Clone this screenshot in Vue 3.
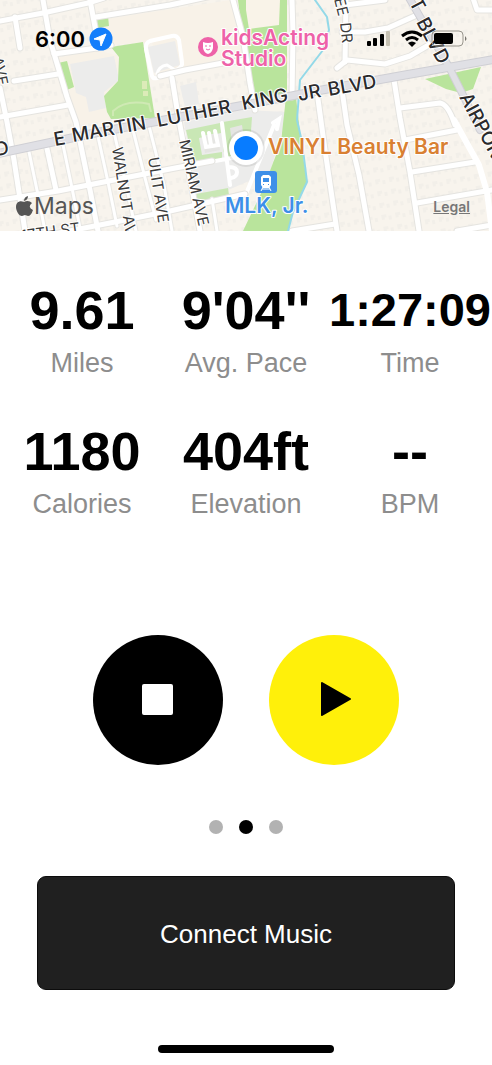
<script setup>
import { ref } from 'vue'

const stats = [
  { value: '9.61', label: 'Miles' },
  { value: "9'04''", label: 'Avg. Pace' },
  { value: '1:27:09', label: 'Time', compact: true },
  { value: '1180', label: 'Calories' },
  { value: '404ft', label: 'Elevation' },
  { value: '--', label: 'BPM' },
]

const pages = ['Map', 'Run', 'Splits']
const current = ref(1)

const streets = [
  'M0 21 L43 13 L88 3 L104 -2',
  'M43 0 L50 40 L67 97 L76 122 L90 190 L98 231',
  'M90 0 L95 27 L97 48',
  'M96 17 L170 5 L212 -4',
  'M54 54 L97 48 L111 45',
  'M15 17 L20 48',
  'M14 81 L58 74',
  'M0 117 L68 105',
  'M0 88 L7 122 L14 160 L25 231',
  'M160 76 L185 70 L223 63 L246 60',
  'M172 78 L178 115 L200 231',
  'M233 0 L243 37 L250 83 L255 110',
  'M292 0 L293 33 L292 97',
  'M0 200 L58 191 L170 169 L212 161',
  'M54 234 L110 223 L170 211 L245 194',
  'M46 144 L56 190',
  'M317 92 L325 150 L337 231',
  'M342 90 L347 125 L359 175 L369 231',
  'M394 80 L400 118 L410 172 L419 231',
  'M400 108 L440 103 Q448 104 455 125',
  'M405 140 L457 130',
  'M412 172 L475 162',
  'M417 203 L492 190',
  'M457 231 L492 225',
  'M346 0 L345 62',
  'M342 32 L365 32 L388 28 L417 15',
  'M337 68 L347 60 L385 64 L410 56 L432 43',
  'M345 5 L385 0',
  'M473 -2 L477 10 L492 10',
  'M292 231 L335 224',
]

const lanes = [
  'M28 147 L38 195 L45 231',
  'M62 140 L72 188 L80 228',
  'M97 132 L108 182 L117 226',
  'M113 128 L125 180 L136 231',
  'M132 126 L144 174 L156 220',
  'M148 122 L164 185 L172 231',
  'M212 199 L217 231',
]
</script>

<template>
  <main class="screen">
    <section class="map" aria-label="Route map">
      <svg class="map-art" viewBox="0 0 492 231" preserveAspectRatio="xMidYMid slice">
        <defs>
          <pattern id="lots" width="14" height="12" patternUnits="userSpaceOnUse" patternTransform="rotate(-10)">
            <path d="M2 2h5v3h-2v2H2zM9 4h3v4h-3z" fill="#f2efe9" />
          </pattern>
        </defs>
        <rect width="492" height="231" fill="#f8f4ed" />
        <rect width="492" height="231" fill="url(#lots)" />
        <path d="M56 58L97 50l22 6v24l-15 16 3 16 4 8-36 6zM99 20l132-20 12 58-85 16-6-32-52 4z" fill="#f8f2e8" />

        <g fill="#ececeb">
          <path d="M70 64l44-8 5 24-15 12 2 16-17 4-3-15-10-4z" />
          <path d="M148 47l27-6 5 24-26 8z" />
          <path d="M180 86l16-4 3 22-14 3z" />
          <path d="M184 122l60-12 44 2-18 60-72 31z" />
        </g>
        <g fill="#b9e49c">
          <path d="M96 18l12-2 1 10-12 2z" />
          <path d="M58 63l9-2 7 26-7 3z" />
          <path d="M111 47l32-5 12 76-44 1-4-7-3-16 14-15 1-24z" />
          <path d="M238 0h49v96l-33 5-7-40-6-36z" />
          <path d="M296 97l5 45 6 40-14 30-5 19h-45l20-42 18-47 5-45z" />
          <path d="M425 79l56-12-8 22-12 4-15-4z" />
        </g>
        <path d="M246 10V0h34l-1 25-30 4z" fill="#f9f3e8" />
        <g fill="#c9e7b5">
          <path d="M186 130l34-7 1 10-22 5 3 17 20-3v8l-28 4z" />
          <path d="M223 122l29-5-2 28-22 14-5-8z" />
          <path d="M196 194l32-6 1 7-30 9z" />
        </g>
        <path d="M202 136l15-3 3 17-15 3zM230 128l12-3 2 14-12 3z" fill="#e5e5e2" />
        <g fill="none" stroke="#fff" stroke-width="4" stroke-linecap="round">
          <path d="M172 36l-22 5q-5 2-4 8l6 27q1 3 5 2l19-8q7-3 6-8l-3-22q-2-5-7-4z" />
          <path d="M157 74q2-8 10-9l8 5" stroke-width="3" />
          <path d="M203 133l3 14 12-2-3-14M209 133l2 12M183 131l12 73M222 123l8 62M229 167q8 0 8 5t-6 6M246 194l28-69M273 123l6-4-2 10M188 166l60-11" />
        </g>
        <path d="M113 116v-5q13-12 36-7l2 8" fill="none" stroke="#cfe9b4" stroke-width="2" />
        <path d="M142 81h5v8h-5zM143 91h5v5h-5z" fill="#dcebb8" />

        <g fill="none" stroke-linejoin="round" stroke-linecap="round">
          <path v-for="d in lanes" :key="'lc' + d" :d="d" stroke="#e9e8e4" stroke-width="5" />
          <path v-for="d in streets" :key="'sc' + d" :d="d" stroke="#e5e4e0" stroke-width="7" />
          <path v-for="d in lanes" :key="'l' + d" :d="d" stroke="#fff" stroke-width="3" />
          <path v-for="d in streets" :key="'s' + d" :d="d" stroke="#fff" stroke-width="5" />
          <path d="M454 120L479 165l8 27 5 39" stroke="#fff" stroke-width="6" />
          <path d="M315 0l12 17 2 13-6 20-23 30-3 40 5 22 5 40-14 30-5 19" stroke="#93d9e8" stroke-width="2" />
          <path d="M-4 154L100 132l150-28 72-14 83-15 91-16" stroke="#cfcfd4" stroke-width="9" />
          <path d="M408-4l41 71 13 26 18 37" stroke="#cfcfd4" stroke-width="8" />
          <path d="M-4 154L100 132l150-28 72-14 83-15 91-16" stroke="#e0e0e5" stroke-width="7" />
          <path d="M408-4l41 71 13 26 18 37" stroke="#e0e0e5" stroke-width="6" />
        </g>

        <g class="road-label major">
          <text transform="translate(55 146) rotate(-10)">E</text>
          <text transform="translate(73 142) rotate(-10)">MARTIN</text>
          <text transform="translate(158 127) rotate(-11)">LUTHER</text>
          <text transform="translate(243 110) rotate(-11)">KING</text>
          <text transform="translate(299 101) rotate(-10)">JR</text>
          <text transform="translate(329 96) rotate(-10)">BLVD</text>
          <text transform="translate(-4 156) rotate(-8)">D</text>
          <text transform="translate(403 -9) rotate(62)">TT</text>
          <text transform="translate(416 22) rotate(62)">BLVD</text>
          <text transform="translate(459 97) rotate(62)">AIRPORT</text>
        </g>
        <g class="road-label">
          <text transform="translate(332 -9) rotate(76)">LEE</text>
          <text transform="translate(340 23) rotate(84)">DR</text>
          <text transform="translate(112 148) rotate(81)">WALNUT AVE</text>
          <text transform="translate(148 158) rotate(81)">ULIT AVE</text>
          <text transform="translate(179 141) rotate(77)">MIRIAM AVE</text>
          <text transform="translate(22 241) rotate(-8)">17TH ST</text>
          <text transform="translate(-8 58) rotate(78)">AVE</text>
        </g>

        <g class="poi pink">
          <circle cx="208" cy="47" r="10" />
          <path d="M203 42q5 2 10 0v6q-1 5-5 6-4-1-5-6z" fill="#fff" />
          <path d="M205 46h2M209 46h2M206 49q2 2 4 0" fill="none" stroke="#f066ad" />
          <text x="221" y="45">kidsActing</text>
          <text x="221" y="66">Studio</text>
        </g>
        <text class="poi orange" x="268" y="154">VINYL Beauty Bar</text>
        <g class="poi blue">
          <rect x="255" y="171" width="22" height="22" rx="3" />
          <path d="M263 175h6l2 2v8l-2 3h-6l-2-3v-8z" fill="#fff" />
          <path d="M263 178h6v4h-6zM263 184h1v1h-1zM268 184h1v1h-1z" />
          <path d="M263 187l-2 4M269 187l2 4M262 189h8" stroke="#fff" fill="none" />
          <text x="225" y="213">MLK, Jr.</text>
        </g>
        <circle cx="246" cy="148" r="19" fill="#000" opacity=".08" />
        <circle cx="246" cy="148" r="17" fill="#fff" />
        <circle cx="246" cy="148" r="12" fill="#087cff" />
      </svg>

      <header class="status">
        <span class="clock">6:00</span>
        <svg class="locate" width="24" height="24" viewBox="0 0 24 24" aria-label="Location in use">
          <circle cx="12" cy="12" r="11.5" fill="#147efb" />
          <path d="M17 7L5 12l6 1 1 6z" fill="#fff" stroke="#fff" stroke-linejoin="round" />
        </svg>
        <svg class="signals" width="102" height="18" viewBox="0 0 102 18" aria-label="Signal, Wi-Fi and battery">
          <rect x="1" y="11" width="4" height="5" rx="1" />
          <rect x="7" y="8" width="4" height="8" rx="1" />
          <rect x="14" y="4" width="4" height="12" rx="1" />
          <rect x="20" y="1" width="4" height="15" rx="1" fill="#c5c0b2" />
          <g fill="none" stroke="#000" stroke-width="3">
            <path d="M36 6q10-8 20 0" />
            <path d="M40 10q6-5 12 0" />
          </g>
          <path d="M42 13q4-3 8 0l-4 4z" />
          <rect x="66" y="1" width="31" height="15" rx="4" fill="none" stroke="#98958d" />
          <rect x="68" y="3" width="19" height="11" rx="2" />
          <path d="M99 6q3 3 0 5z" fill="#77746e" />
        </svg>
      </header>

      <footer class="credits">
        <span class="brand">
          <svg width="17" height="20" viewBox="0 0 17 20" aria-label="Apple">
            <path d="M12 0q0 4-4 5 0-4 4-5M16 7q-5 4 1 7-2 6-5 6l-3-1-3 1c-3 0-6-5-6-9 0-5 4-7 8-5 3-2 6-1 8 1" />
          </svg>Maps</span>
        <a class="legal" href="#legal">Legal</a>
      </footer>
    </section>

    <dl class="stats">
      <div v-for="s in stats" :key="s.label" class="stat">
        <dd :class="{ compact: s.compact }">{{ s.value }}</dd>
        <dt>{{ s.label }}</dt>
      </div>
    </dl>

    <div class="controls">
      <button class="round stop" type="button" aria-label="Stop">
        <svg width="32" height="32" viewBox="0 0 32 32"><rect width="31" height="31" rx="2" fill="#fff" /></svg>
      </button>
      <button class="round play" type="button" aria-label="Resume">
        <svg width="38" height="38" viewBox="0 0 38 38">
          <path d="M7 2L35 18 7 34z" stroke="#000" stroke-width="2" stroke-linejoin="round" />
        </svg>
      </button>
    </div>

    <nav class="dots" aria-label="Pages">
      <button
        v-for="(p, i) in pages"
        :key="p"
        type="button"
        :aria-label="p"
        :class="{ on: i === current }"
        @click="current = i"
      ></button>
    </nav>

    <button class="music" type="button">Connect Music</button>
    <div class="home-bar"></div>
  </main>
</template>

<style>
body {
  background: #fff;
}
</style>

<style scoped>
.screen {
  min-height: 100vh;
  box-sizing: border-box;
  padding-bottom: 12px;
  display: flex;
  flex-direction: column;
  background: #fff;
  color: #000;
  font-family: "Liberation Sans", Arial, sans-serif;
}
button {
  border: 0;
  padding: 0;
  font: inherit;
  cursor: pointer;
}
.map {
  position: relative;
  font-family: Inter, sans-serif;
}
.map-art {
  display: block;
  width: 100%;
  height: 231px;
}
.road-label {
  font-size: 15px;
  fill: #3c3c3c;
  stroke: #fff;
  stroke-width: 2px;
  stroke-linejoin: round;
  paint-order: stroke;
}
.major {
  font-size: 19px;
  font-weight: 500;
  fill: #2a2a2c;
}
.poi {
  font-size: 21px;
  font-weight: 600;
}
.poi text,
text.poi {
  stroke: #fff;
  stroke-width: 2px;
  stroke-linejoin: round;
  paint-order: stroke;
}
.pink {
  fill: #ee62a8;
}
.orange {
  fill: #d98032;
}
.blue {
  fill: #3d8fe8;
}
.status {
  position: absolute;
  inset: 0 0 auto;
  height: 78px;
  padding: 0 24px 0 35px;
  display: flex;
  align-items: center;
  gap: 4px;
}
.clock {
  font-size: 22px;
  font-weight: 600;
}
.signals {
  margin-left: auto;
}
.credits {
  position: absolute;
  inset: auto 0 0;
  padding: 0 22px 10px 16px;
  display: flex;
  align-items: center;
  justify-content: space-between;
  color: #555;
}
.brand {
  display: flex;
  align-items: center;
  gap: 1px;
  font-size: 23px;
  line-height: 30px;
  fill: #555;
}
.legal {
  color: #777;
  font-size: 14px;
  font-weight: 600;
}
.stats {
  margin: 49px 0 0;
  display: grid;
  grid-template-columns: repeat(3, minmax(0, 1fr));
  row-gap: 42px;
}
.stat {
  display: flex;
  flex-direction: column;
  align-items: center;
  gap: 7px;
  white-space: nowrap;
}
dd {
  margin: 0;
  font-size: 54px;
  font-weight: 700;
  line-height: 60px;
}
dd.compact {
  font-size: 47px;
}
dt {
  font-size: 27px;
  line-height: 32px;
  color: #8d8d8d;
}
.controls {
  margin-top: 115px;
  display: flex;
  justify-content: center;
  gap: 46px;
}
.round {
  width: 130px;
  height: 130px;
  border-radius: 50%;
  display: grid;
  place-items: center;
}
.stop {
  background: #000;
}
.play {
  background: #fff00a;
}
.dots {
  margin-top: 55px;
  display: flex;
  justify-content: center;
  gap: 16px;
}
.dots button {
  width: 14px;
  height: 14px;
  border-radius: 50%;
  background: #b2b2b2;
}
.dots button.on {
  background: #000;
}
.music {
  margin: 42px 37px 0;
  height: 114px;
  padding-top: 2px;
  border: 1px solid #0c0c0c;
  border-radius: 9px;
  background: #202020;
  color: #fff;
  font-size: 26px;
}
.home-bar {
  width: 176px;
  height: 8px;
  margin: 55px auto 0;
  border-radius: 4px;
  background: #000;
}
</style>
